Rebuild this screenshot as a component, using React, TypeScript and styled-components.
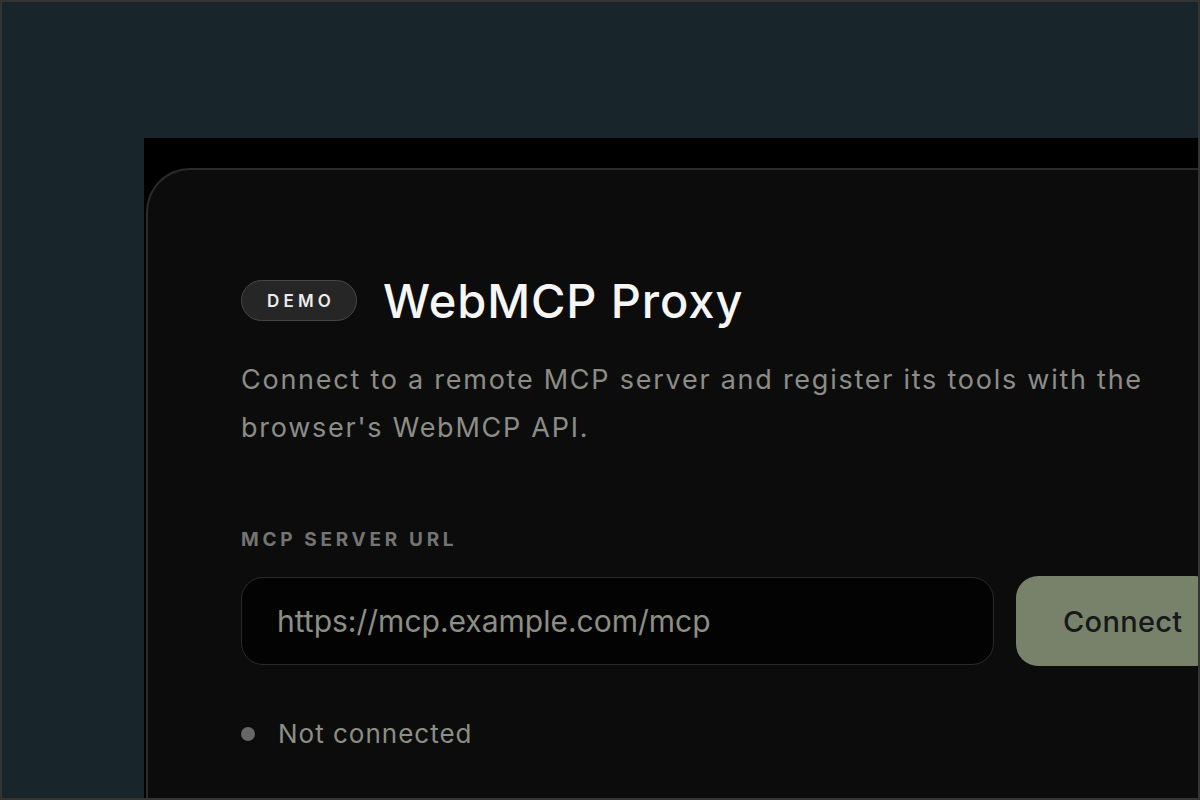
import React from "react";
import styled, { createGlobalStyle } from "styled-components";

const Global = createGlobalStyle`
  html, body { margin: 0; padding: 0; background: #18252a; }
  * { box-sizing: border-box; }
`;

const Frame = styled.div`
  width: 1200px;
  height: 800px;
  border: 2px solid #343434;
  background: #18252a;
  overflow: hidden;
  display: flex;
  padding: 136px 0 0 142px;
  font-family: Inter, "Noto Sans", sans-serif;
`;

const Stage = styled.div`
  flex: 1;
  background: #000;
  padding: 30px 0 0 2px;
  display: flex;
  min-width: 0;
`;

const Card = styled.section`
  flex: 1;
  min-width: 1200px;
  background: #0c0c0c;
  border: 2px solid #2b2b2b;
  border-right: none;
  border-bottom: none;
  border-top-left-radius: 44px;
  padding: 110px 0 0 93px;
`;

const Header = styled.div`
  display: flex;
  align-items: center;
  gap: 26px;
`;

const Pill = styled.span`
  display: inline-flex;
  align-items: center;
  justify-content: center;
  width: 116px;
  height: 41px;
  border-radius: 21px;
  background: #262626;
  border: 1.5px solid #474747;
  color: #ececec;
  font-size: 17px;
  font-weight: 600;
  letter-spacing: 4.2px;
  padding-left: 4px;
`;

const Title = styled.h1`
  margin: 0;
  color: #f6f6f6;
  font-size: 47px;
  line-height: 41px;
  font-weight: 500;
  letter-spacing: 0.9px;
`;

const Description = styled.p`
  margin: 35px 0 0;
  width: 950px;
  color: #8c8d87;
  font-size: 27px;
  line-height: 48px;
  letter-spacing: 1.75px;
`;

const Label = styled.div`
  margin-top: 76px;
  color: #747474;
  font-size: 19px;
  font-weight: 700;
  letter-spacing: 3.7px;
`;

const Row = styled.div`
  margin-top: 25px;
  display: flex;
  gap: 22px;
  align-items: center;
`;

const UrlInput = styled.input`
  width: 753px;
  height: 88px;
  border-radius: 22px;
  background: #030303;
  border: 1.5px solid #2a2a2a;
  padding: 0 0 0 35px;
  font-family: Inter, "Noto Sans", sans-serif;
  font-size: 30px;
  color: #d0d0d0;
  outline: none;
  &::placeholder { color: #8c8f84; }
`;

const ConnectButton = styled.button`
  width: 200px;
  height: 90px;
  border-radius: 22px;
  border: none;
  background: #78826a;
  color: #16181a;
  font-family: Inter, "Noto Sans", sans-serif;
  font-size: 29px;
  font-weight: 500;
  letter-spacing: 0.3px;
  text-align: left;
  padding-left: 47px;
`;

const Status = styled.div`
  margin-top: 52px;
  display: flex;
  align-items: center;
  gap: 23px;
  color: #8c8f84;
  font-size: 26px;
  letter-spacing: 1px;
`;

const Dot = styled.span`
  width: 14px;
  height: 14px;
  border-radius: 50%;
  background: #676767;
`;

export default function App() {
  return (
    <>
      <Global />
      <Frame>
        <Stage>
          <Card>
            <Header>
              <Pill>DEMO</Pill>
              <Title>WebMCP Proxy</Title>
            </Header>
            <Description>
              Connect to a remote MCP server and register its tools with the browser's WebMCP API.
            </Description>
            <Label>MCP SERVER URL</Label>
            <Row>
              <UrlInput placeholder="https://mcp.example.com/mcp" />
              <ConnectButton>Connect</ConnectButton>
            </Row>
            <Status>
              <Dot />
              Not connected
            </Status>
          </Card>
        </Stage>
      </Frame>
    </>
  );
}
